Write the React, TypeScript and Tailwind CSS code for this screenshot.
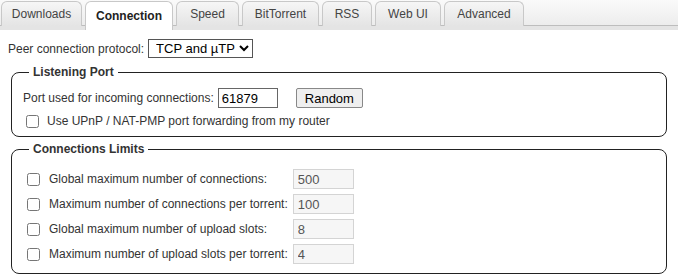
import React from 'react';

const TABS = [
  { label: 'Downloads', w: 'w-[81px]' },
  { label: 'Connection', w: 'w-[88px]' },
  { label: 'Speed', w: 'w-[63px]' },
  { label: 'BitTorrent', w: 'w-[77px]' },
  { label: 'RSS', w: 'w-[50px]' },
  { label: 'Web UI', w: 'w-[66px]' },
  { label: 'Advanced', w: 'w-[80px]' },
];

const LIMITS = [
  { label: 'Global maximum number of connections:', value: '500' },
  { label: 'Maximum number of connections per torrent:', value: '100' },
  { label: 'Global maximum number of upload slots:', value: '8' },
  { label: 'Maximum number of upload slots per torrent:', value: '4' },
];

export default function App() {
  return (
    <div className="h-[280px] w-[678px] overflow-hidden bg-white text-[12px] text-[#333]" style={{ fontFamily: '"Liberation Sans", Arial, sans-serif' }}>
      {/* tab strip */}
      <div className="flex h-[30px] items-end gap-[3px] border-b-[4px] border-[#e4e4e4] bg-gradient-to-b from-[#fafafa] to-[#ececec] pl-[1px] shadow-[inset_0_-1px_0_#bdbdbd]">
        {TABS.map((t) => {
          const active = t.label === 'Connection';
          return (
            <div
              key={t.label}
              className={
                active
                  ? `relative -mb-[4px] flex h-[29px] items-center justify-center rounded-t-[6px] border border-b-0 border-[#c8c8c8] bg-white font-bold text-[#222] ${t.w}`
                  : `flex h-[25px] items-center justify-center rounded-t-[6px] border border-b-0 border-[#c8c8c8] bg-gradient-to-b from-[#f6f6f6] to-[#e4e4e4] text-[#444] ${t.w}`
              }
            >
              {t.label}
            </div>
          );
        })}
      </div>

      <div className="px-[8px] pt-[9px]">
        <div className="flex items-center">
          <span>Peer connection protocol:</span>
          <select className="ml-[4px] h-[19px] border border-[#555] bg-white pl-[3px] pr-0 text-[13px] text-black" defaultValue="both">
            <option value="both">TCP and µTP</option>
          </select>
        </div>

        <fieldset className="mx-[3px] mt-[5px] rounded-[8px] border border-[#222] px-[11px] pb-[6px] pt-[7px]">
          <legend className="ml-[6px] px-[4px] font-bold text-[#333]">Listening Port</legend>
          <div className="flex items-center">
            <span>Port used for incoming connections:</span>
            <input className="ml-[4px] h-[20px] w-[60px] border border-[#666] px-[3px] text-[13px] text-black outline-none" defaultValue="61879" />
            <button className="ml-[18px] h-[20px] rounded-[2px] border border-[#888] bg-[#efefef] px-[8px] text-[13px] text-black">Random</button>
          </div>
          <label className="mt-[4px] flex items-center">
            <input type="checkbox" className="ml-[3px] mr-[8px] h-[13px] w-[13px]" />
            <span>Use UPnP / NAT-PMP port forwarding from my router</span>
          </label>
        </fieldset>

        <fieldset className="mx-[3px] mt-[3px] rounded-[8px] border border-[#222] px-[14px] pb-[9px] pt-[11px]">
          <legend className="ml-[3px] px-[4px] font-bold text-[#333]">Connections Limits</legend>
          <div className="grid grid-cols-[auto_auto_1fr] items-center gap-y-[5px]">
            {LIMITS.map((r) => (
              <React.Fragment key={r.label}>
                <input type="checkbox" className="ml-[1px] mr-[9px] h-[13px] w-[13px]" />
                <span className="pr-[5px]">{r.label}</span>
                <input disabled className="h-[20px] w-[61px] border border-[#d4d4d4] bg-[#f6f6f6] px-[4px] text-[13px] text-[#555]" defaultValue={r.value} />
              </React.Fragment>
            ))}
          </div>
        </fieldset>
      </div>
    </div>
  );
}
